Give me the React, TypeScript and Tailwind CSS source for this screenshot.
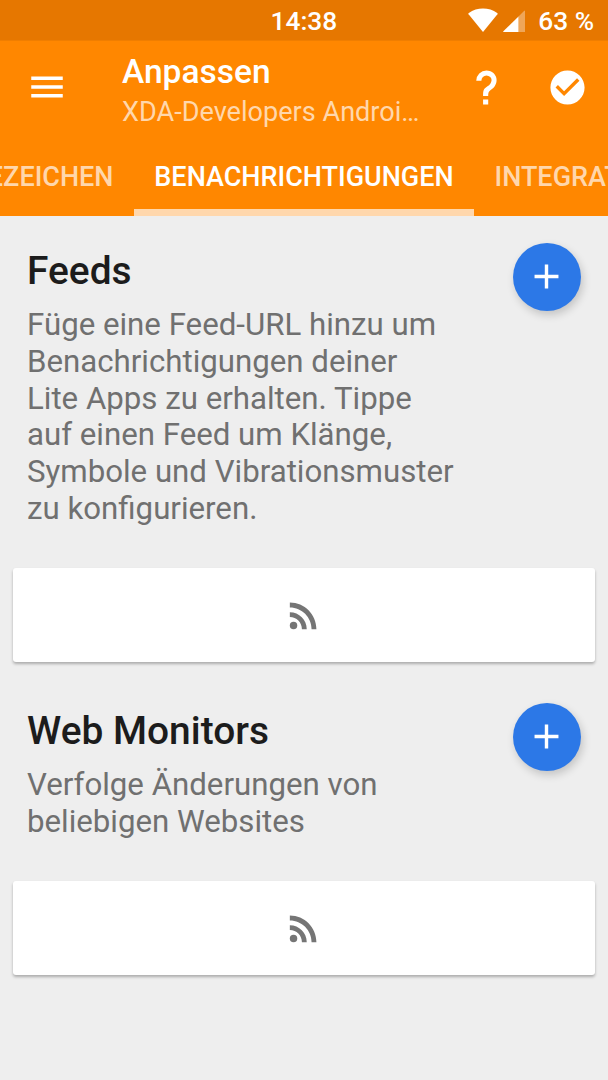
import type { ReactNode } from "react";

const HelpIcon = () => (
  <svg viewBox="0 0 24 24" className="size-[41px] fill-white">
    <path d="M10,19H13V22H10V19M12,2C17.35,2.22 19.68,7.62 16.5,11.67C15.67,12.67 14.33,13.33 13.67,14.17C13,15 13,16 13,17H10C10,15.33 10,13.92 10.67,12.92C11.33,11.92 12.67,11.33 13.5,10.67C15.92,8.43 15.32,5.26 12,5A3,3 0 0,0 9,8H6A6,6 0 0,1 12,2Z" />
  </svg>
);

const CheckCircleIcon = () => (
  <svg viewBox="0 0 24 24" className="size-[41px] fill-white">
    <path d="M12 2C6.48 2 2 6.48 2 12s4.48 10 10 10 10-4.48 10-10S17.52 2 12 2zm-2 15l-5-5 1.41-1.41L10 14.17l7.59-7.59L19 8l-9 9z" />
  </svg>
);

const MenuIcon = () => (
  <svg viewBox="0 0 24 24" className="size-[42px] fill-white">
    <path d="M3 18h18v-2H3v2zm0-5h18v-2H3v2zm0-7v2h18V6H3z" />
  </svg>
);

const RssIcon = () => (
  <svg viewBox="0 0 24 24" className="size-[41px] fill-[#757575]">
    <circle cx="6.18" cy="17.82" r="2.18" />
    <path d="M4 4.44v2.83c7.03 0 12.73 5.7 12.73 12.73h2.83c0-8.59-6.97-15.56-15.56-15.56zm0 5.66v2.83c3.9 0 7.07 3.17 7.07 7.07h2.83c0-5.47-4.43-9.9-9.9-9.9z" />
  </svg>
);

const StatusBar = () => (
  <div className="flex h-[41px] items-center justify-end border-b border-[#f07e00] bg-[#e67700] pr-[14px] text-[26.300px] leading-[30px] font-medium text-white">
    <span className="mr-[131px] pt-[2px]">14:38</span>
    <svg viewBox="0 0 30 24" className="mr-[5px] h-6 w-[30px] fill-white">
      <path d="M15 24L.6 6.2C.2 5.7.3 5.3.8 4.9 9-1 21-1 29.2 4.9c.5.4.6.8.2 1.3z" />
    </svg>
    <svg viewBox="0 0 22 22" className="mt-px mr-[13px] size-[22px] fill-white">
      <path d="M15.5 6.5L21 1q1-1 1 0V22H15.5z" className="opacity-35" />
      <path d="M15.5 6.5V22H1q-1.400 0-.4-1z" />
    </svg>
    <span className="pt-[2px]">63 %</span>
  </div>
);

const Header = () => (
  <header className="bg-[#ff8700] text-white">
    <div className="flex h-[97px] items-start pr-[20px] pl-[26px]">
      <div className="pt-[25px]">
        <MenuIcon />
      </div>
      <div className="ml-[54px] w-[300px] pt-[11px]">
        <h1 className="text-[33.500px] leading-[40px] font-medium">Anpassen</h1>
        <p className="truncate text-[27.100px] leading-[40px] text-[#ffd7ac]">
          XDA-Developers Androi…
        </p>
      </div>
      <div className="ml-auto flex gap-[40px] pt-[26px]">
        <HelpIcon />
        <CheckCircleIcon />
      </div>
    </div>
    <nav className="flex h-[78px] justify-center overflow-hidden text-[27px] leading-[32px] font-medium whitespace-nowrap">
      <span className="flex w-[134px] shrink-0 justify-end pt-[23px] pr-[20.500px] text-[#ffd7ac]">
        LESEZEICHEN
      </span>
      <span className="w-[340px] shrink-0 border-b-[7px] border-[#ffd7ac] pt-[23px] text-center">
        BENACHRICHTIGUNGEN
      </span>
      <span className="w-[134px] shrink-0 pt-[23px] pl-[20.500px] text-[#ffd7ac]">
        INTEGRATION
      </span>
    </nav>
  </header>
);

const Section = ({ title, children }: { title: string; children: ReactNode }) => (
  <section>
    <div className="flex justify-between pr-[27px] pl-[27px]">
      <div className="pt-[5px]">
        <h2 className="text-[38.900px] leading-[45px] font-medium text-[#1c1c1c]">
          {title}
        </h2>
        <p className="mt-[14px] mb-[-1px] text-[31.220px] leading-[36.750px] whitespace-nowrap text-[#707070]">
          {children}
        </p>
      </div>
      <button
        aria-label="Hinzufügen"
        className="flex size-[68px] items-center justify-center rounded-full bg-[#2c78e7] pr-px pb-px shadow-[2px_4px_8px_rgba(0,0,0,0.18)]"
      >
        <svg viewBox="0 0 24 24" className="size-[41px] fill-white">
          <path d="M19 13h-6v6h-2v-6H5v-2h6V5h2v6h6v2z" />
        </svg>
      </button>
    </div>
    <div className="mr-[13.500px] ml-[13px] mt-[41.500px] flex h-[94px] items-center justify-center rounded-[3px] bg-white pt-px pr-px shadow-[0_2px_3px_rgba(0,0,0,0.28)]">
      <RssIcon />
    </div>
  </section>
);

const App = () => (
  <div className="h-[1080px] w-[608px] overflow-hidden bg-[#eeeeee] font-['Roboto',sans-serif]">
    <StatusBar />
    <Header />
    <main className="flex flex-col gap-[41px] pt-[27px]">
      <Section title="Feeds">
        Füge eine Feed-URL hinzu um
        <br />
        Benachrichtigungen deiner
        <br />
        Lite Apps zu erhalten. Tippe
        <br />
        auf einen Feed um Klänge,
        <br />
        Symbole und Vibrationsmuster
        <br />
        zu konfigurieren.
      </Section>
      <Section title="Web Monitors">
        Verfolge Änderungen von
        <br />
        beliebigen Websites
      </Section>
    </main>
  </div>
);

export default App;
